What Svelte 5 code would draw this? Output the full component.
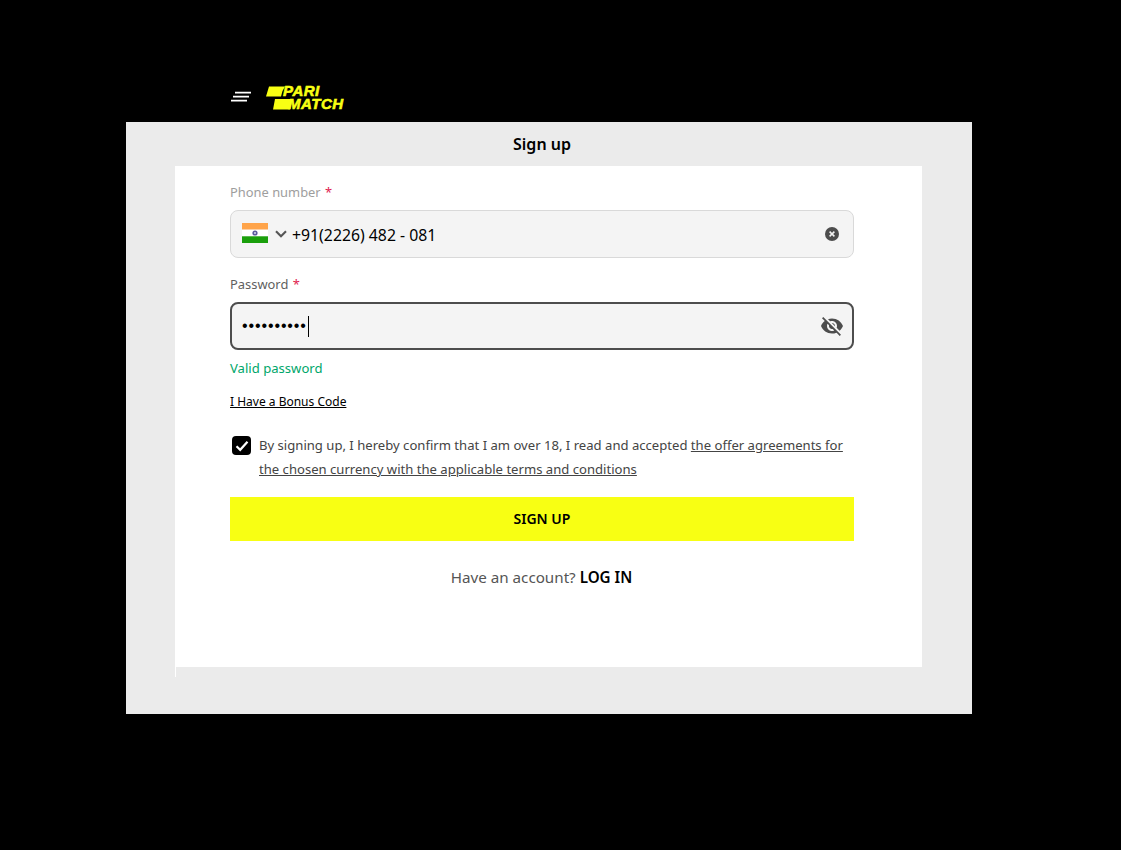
<script lang="ts">
  let agreed = $state(true);
  let phone = "+91(2226) 482 - 081";
</script>

<div class="page">
  <header class="topbar">
    <button class="burger" aria-label="Menu">
      <svg width="21" height="12" viewBox="0 0 21 12">
        <path d="M4 1.7H20M2 5.7H18M0 9.7H16" stroke="#fff" stroke-width="1.8" fill="none" />
      </svg>
    </button>
    <div class="logo">
      <svg class="logo-marks" width="80" height="26" viewBox="0 0 80 26">
        <polygon points="3,1.5 19,1.5 16.5,6 15,11.5 0,11.5" fill="#f8ff13" />
        <polygon points="9,14 26,14 24,24.5 7,24.5" fill="#f8ff13" />
      </svg>
      <span class="logo-pari">PARI</span>
      <span class="logo-match">MATCH</span>
    </div>
  </header>

  <main class="panel">
    <h1>Sign up</h1>
    <div class="card">
      <form class="form">
        <label class="label muted" for="phone">Phone number <span class="req">*</span></label>
        <div class="field">
          <svg class="flag" width="26" height="20" viewBox="0 0 26 20">
            <rect width="26" height="6.7" fill="#ffa44a" />
            <rect y="6.7" width="26" height="6.6" fill="#fff" />
            <rect y="13.3" width="26" height="6.7" fill="#1a9f0b" />
            <circle cx="13" cy="10" r="2.6" fill="#5a5a9c" />
            <circle cx="13" cy="10" r="1" fill="#d8d8ee" />
          </svg>
          <svg class="chevron" width="12" height="8" viewBox="0 0 12 8">
            <path d="M1 1.2L6 6.2L11 1.2" fill="none" stroke="#555" stroke-width="2.1" />
          </svg>
          <input id="phone" class="phone" value={phone} />
          <svg class="clear" width="14" height="14" viewBox="0 0 14 14">
            <circle cx="7" cy="7" r="7" fill="#4d4d4d" />
            <path d="M4.6 4.6L9.4 9.4M9.4 4.6L4.6 9.4" stroke="#f4f4f4" stroke-width="1.5" />
          </svg>
        </div>

        <label class="label pw-label" for="password">Password <span class="req">*</span></label>
        <div class="field focused">
          <span id="password" class="dots">••••••••••</span>
          <span class="caret"></span>
          <svg class="eye" width="24" height="24" viewBox="0 0 24 24">
            <path
              fill="#4d4d4d"
              d="M12 7c2.76 0 5 2.24 5 5 0 .65-.13 1.26-.36 1.83l2.92 2.92c1.51-1.26 2.7-2.89 3.43-4.75-1.73-4.39-6-7.5-11-7.5-1.4 0-2.74.25-3.98.7l2.16 2.16C10.74 7.13 11.35 7 12 7zM2 4.27l2.28 2.28.46.46C3.08 8.3 1.78 10.02 1 12c1.73 4.39 6 7.5 11 7.5 1.55 0 3.03-.3 4.38-.84l.42.42L19.73 22 21 20.73 3.27 3 2 4.27zM7.53 9.8l1.55 1.55c-.05.21-.08.43-.08.65 0 1.66 1.34 3 3 3 .22 0 .44-.03.65-.08l1.55 1.55c-.67.33-1.41.53-2.2.53-2.76 0-5-2.24-5-5 0-.79.2-1.53.53-2.2zm4.31-.78l3.15 3.15.02-.16c0-1.66-1.34-3-3-3l-.17.01z"
            />
          </svg>
        </div>
        <p class="valid">Valid password</p>
        <a class="bonus" href="#bonus">I Have a Bonus Code</a>

        <div class="terms">
          <button type="button" class="check" aria-label="Accept" onclick={() => (agreed = !agreed)}>
            {#if agreed}
              <svg width="14" height="12" viewBox="0 0 14 12">
                <path d="M1.5 6.2L5.2 9.8L12.5 1.8" fill="none" stroke="#fff" stroke-width="2.2" />
              </svg>
            {/if}
          </button>
          <p>
            By signing up, I hereby confirm that I am over 18, I read and accepted
            <a href="#offer">the offer agreements for the chosen currency with the applicable terms and conditions</a>
          </p>
        </div>

        <button type="button" class="submit">SIGN UP</button>
        <p class="login">Have an account? <a href="#login">LOG IN</a></p>
      </form>
    </div>
    <div class="card-edge"></div>
  </main>
</div>

<style>
  :global(body) {
    margin: 0;
    background: #000;
  }

  .page {
    width: 1121px;
    height: 850px;
    background: #000;
    font-family: "Noto Sans", "Open Sans", sans-serif;
    overflow: hidden;
  }

  .topbar {
    height: 122px;
    box-sizing: border-box;
    padding: 85px 0 0 231px;
    display: flex;
    align-items: flex-start;
    gap: 14px;
  }

  .burger {
    background: none;
    border: 0;
    padding: 0;
    margin-top: 6px;
    width: 21px;
    height: 12px;
    line-height: 0;
  }

  .logo {
    position: relative;
    width: 80px;
    height: 26px;
    color: #f8ff13;
    font-family: "Liberation Sans", sans-serif;
    font-weight: 700;
    font-style: italic;
    font-size: 15px;
    line-height: 12px;
    letter-spacing: 0.5px;
  }

  .logo-marks {
    position: absolute;
    left: 0;
    top: 0;
  }

  .logo-pari {
    position: absolute;
    left: 17px;
    top: 0;
    -webkit-text-stroke: 0.6px #f8ff13;
  }

  .logo-match {
    position: absolute;
    left: 22px;
    top: 13px;
    -webkit-text-stroke: 0.6px #f8ff13;
  }

  .panel {
    position: relative;
    width: 846px;
    height: 592px;
    margin-left: 126px;
    background: #ebebeb;
    box-sizing: border-box;
    padding: 0 50px 0 49px;
  }

  h1 {
    margin: 0;
    height: 44px;
    padding-right: 13px;
    line-height: 44px;
    text-align: center;
    font-size: 16px;
    font-weight: 600;
    color: #000;
  }

  .card {
    height: 501px;
    background: #fff;
  }

  .card-edge {
    position: absolute;
    left: 49px;
    top: 545px;
    width: 1px;
    height: 10px;
    background: #fff;
  }

  .form {
    width: 624px;
    margin-left: 55px;
    padding-top: 16px;
    display: flex;
    flex-direction: column;
    align-items: stretch;
  }

  .label {
    font-size: 12.9px;
    line-height: 20px;
    color: #5f5f5f;
    margin-bottom: 8px;
  }

  .muted {
    color: #9e9e9e;
  }

  .pw-label {
    margin-top: 16px;
  }

  .req {
    color: #e0224e;
    margin-left: 1px;
  }

  .field {
    height: 48px;
    box-sizing: border-box;
    border: 1px solid #d9d9d9;
    border-radius: 8px;
    background: #f4f4f4;
    display: flex;
    align-items: center;
    padding-left: 11px;
    padding-right: 14px;
  }

  .focused {
    border: 2px solid #4d4d4d;
    padding-left: 10px;
    padding-right: 8px;
  }

  .flag {
    flex: none;
    margin-top: -2px;
  }

  .chevron {
    flex: none;
    margin-left: 7px;
  }

  .phone {
    flex: 1;
    min-width: 0;
    border: 0;
    outline: 0;
    padding: 2px 0 0;
    margin-left: 5px;
    background: transparent;
    font-family: inherit;
    font-size: 15.8px;
    color: #000;
  }

  .clear {
    flex: none;
  }

  .dots {
    font-size: 16px;
    color: #000;
    letter-spacing: 0.88px;
    font-family: "Liberation Sans", sans-serif;
    line-height: 24px;
  }

  .caret {
    width: 1px;
    height: 21px;
    margin-left: 1px;
    background: #000;
  }

  .eye {
    flex: none;
    margin-left: auto;
  }

  .valid {
    margin: 8px 0 0;
    font-size: 13.1px;
    line-height: 20px;
    color: #00a66a;
  }

  .bonus {
    align-self: flex-start;
    margin-top: 15px;
    font-size: 12px;
    line-height: 18px;
    color: #000;
  }

  .terms {
    margin-top: 22px;
    display: flex;
    align-items: flex-start;
    gap: 8px;
    padding-left: 2px;
  }

  .check {
    flex: none;
    width: 19px;
    height: 19px;
    margin-top: 3px;
    padding: 0;
    border: 0;
    border-radius: 4px;
    background: #000;
    display: flex;
    align-items: center;
    justify-content: center;
  }

  .terms p {
    margin: 0;
    font-size: 13.1px;
    line-height: 24px;
    color: #444;
  }

  .terms a {
    color: #444;
  }

  .submit {
    margin-top: 16px;
    height: 44px;
    padding: 0 0 2px;
    border: 0;
    background: #f8ff13;
    font-family: inherit;
    font-size: 14px;
    font-weight: 600;
    color: #000;
  }

  .login {
    margin: 25px 0 0;
    padding-right: 1px;
    text-align: center;
    font-size: 15.2px;
    line-height: 22px;
    color: #555;
  }

  .login a {
    color: #000;
    font-weight: 600;
    text-decoration: none;
  }
</style>
